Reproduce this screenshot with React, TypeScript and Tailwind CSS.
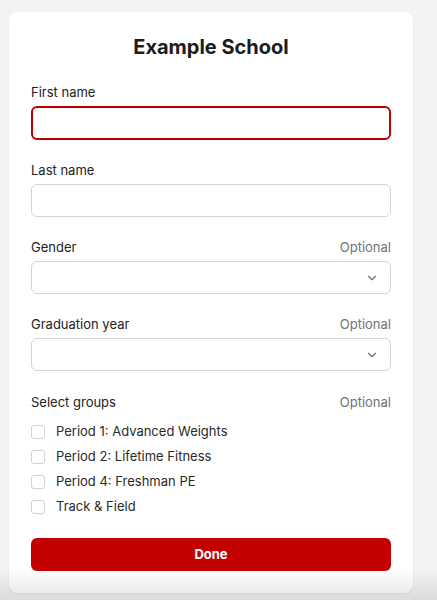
import { ChevronDown } from "lucide-react";

const groups = [
  "Period 1: Advanced Weights",
  "Period 2: Lifetime Fitness",
  "Period 4: Freshman PE",
  "Track & Field",
];

function FieldLabel({ text, optional }: { text: string; optional?: boolean }) {
  return (
    <div className="flex h-[18px] items-center justify-between text-[13px] leading-[18px]">
      <span className="text-[#222]">{text}</span>
      {optional && <span className="text-[#6f7277]">Optional</span>}
    </div>
  );
}

function TextField({ label, focused }: { label: string; focused?: boolean }) {
  return (
    <div className="flex flex-col gap-[5px]">
      <FieldLabel text={label} />
      <input
        className={
          focused
            ? "h-[34px] w-full rounded-[6px] border-2 border-[#c00000] bg-white px-3 text-[13px] outline-none"
            : "h-[33px] w-full rounded-[6px] border border-[#d4d4d8] bg-white px-3 text-[13px] outline-none"
        }
      />
    </div>
  );
}

function SelectField({ label }: { label: string }) {
  return (
    <div className="flex flex-col gap-[5px]">
      <FieldLabel text={label} optional />
      <div className="flex h-[33px] w-full items-center justify-end rounded-[6px] border border-[#d4d4d8] bg-white pr-[11px]">
        <ChevronDown className="h-[14px] w-[14px] text-[#6b7280]" strokeWidth={2} />
      </div>
    </div>
  );
}

export default function App() {
  return (
    <div
      className="relative min-h-screen overflow-hidden bg-[#f3f3f3] pt-3"
      style={{ fontFamily: "Inter, 'Noto Sans', sans-serif" }}
    >
      <div className="ml-[9px] w-[404px] rounded-[8px] bg-white px-[22px] pt-[21px] pb-[22px] shadow-[0_1px_2px_rgba(0,0,0,0.08)]">
        <h1 className="h-[28px] text-center text-[20px] font-bold leading-[28px] text-[#1c1c1c]">
          Example School
        </h1>

        <div className="mt-[22px] flex flex-col gap-[21px]">
          <TextField label="First name" focused />
          <TextField label="Last name" />
          <SelectField label="Gender" />
          <SelectField label="Graduation year" />
        </div>

        <div className="mt-[22px]">
          <FieldLabel text="Select groups" optional />
          <div className="mt-[11px] flex flex-col gap-[5px]">
            {groups.map((g) => (
              <label key={g} className="flex h-[20px] items-center gap-[11px]">
                <span className="h-[14px] w-[14px] rounded-[3px] border border-[#d1d1d6] bg-white" />
                <span className="text-[13px] text-[#2a2a2a]">{g}</span>
              </label>
            ))}
          </div>
        </div>

        <button className="mt-[21px] h-[33px] w-full rounded-[6px] bg-[#c20000] text-[13px] font-bold text-white">
          Done
        </button>
      </div>

      <div className="pointer-events-none absolute inset-x-0 bottom-0 h-[32px] bg-gradient-to-b from-transparent to-black/10" />
    </div>
  );
}
